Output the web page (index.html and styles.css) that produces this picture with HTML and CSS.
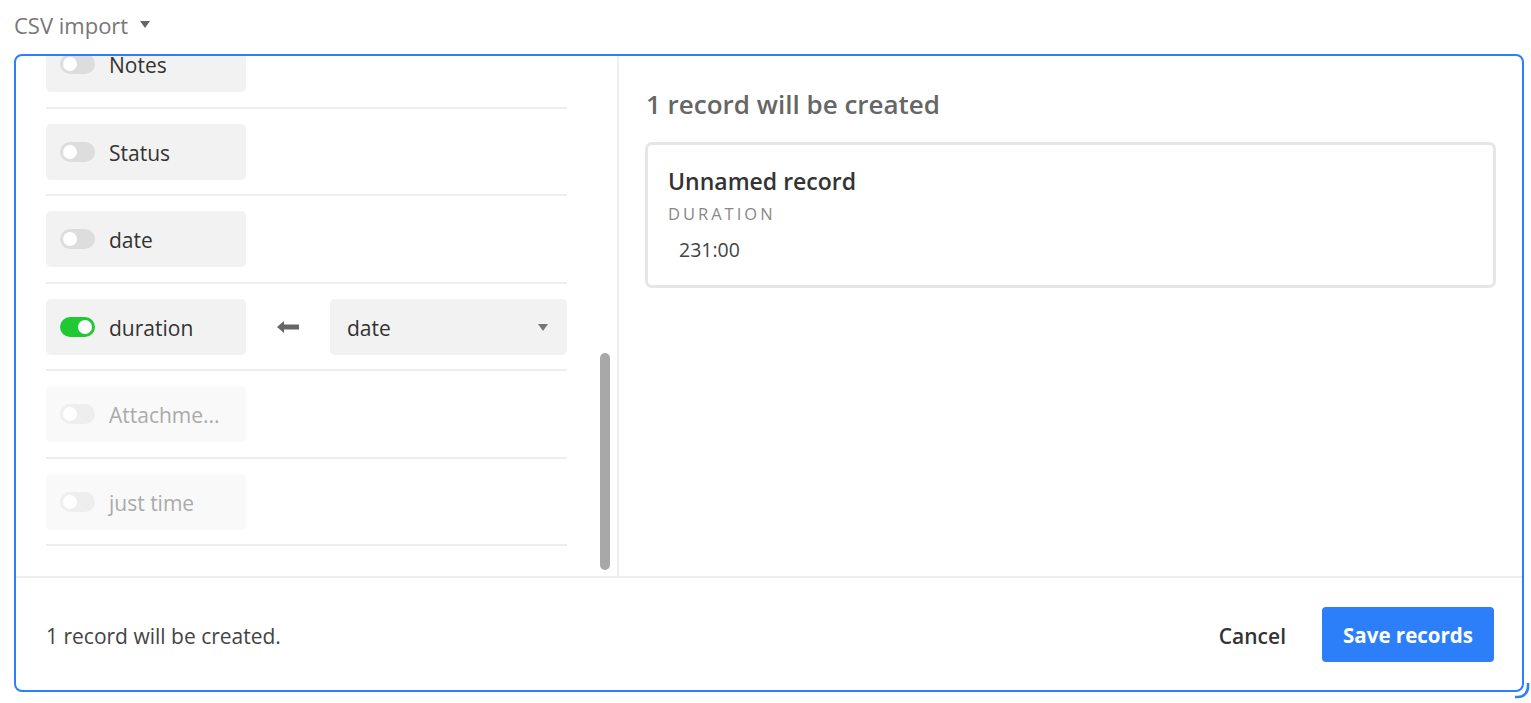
FILE: index.html
```html
<!DOCTYPE html>
<html>
<head>
<meta charset="utf-8">
<link rel="stylesheet" href="styles.css">
</head>
<body>
<div class="title">CSV import <span class="caret"></span></div>
<div class="panel">
  <div class="body">
    <div class="left">
      <div class="list">
        <div class="row"><div class="pill"><span class="toggle"></span><span class="name">Notes</span></div></div>
        <div class="row"><div class="pill"><span class="toggle"></span><span class="name">Status</span></div></div>
        <div class="row"><div class="pill"><span class="toggle"></span><span class="name">date</span></div></div>
        <div class="row">
          <div class="pill"><span class="toggle on"></span><span class="name">duration</span></div>
          <svg class="arrow" width="22" height="12" viewBox="0 0 22 12"><path d="M0 6 L7 0 V3.5 H22 V8.5 H7 V12 Z" fill="#666"/></svg>
          <div class="select"><span>date</span><span class="caret small"></span></div>
        </div>
        <div class="row disabled"><div class="pill"><span class="toggle"></span><span class="name">Attachme...</span></div></div>
        <div class="row disabled"><div class="pill"><span class="toggle"></span><span class="name">just time</span></div></div>
      </div>
      <div class="thumb"></div>
    </div>
    <div class="right">
      <h2 class="heading">1 record will be created</h2>
      <div class="card">
        <div class="card-title">Unnamed record</div>
        <div class="label">DURATION</div>
        <div class="value">231:00</div>
      </div>
    </div>
  </div>
  <div class="footer">
    <div class="summary">1 record will be created.</div>
    <div class="actions">
      <button class="cancel">Cancel</button>
      <button class="save">Save records</button>
    </div>
  </div>
  <svg class="handle" width="16" height="18" viewBox="0 0 16 18"><path d="M13 0 V4 A10 10 0 0 1 3 14 H0" fill="none" stroke="#2d7ff9" stroke-width="2.6"/></svg>
</div>
</body>
</html>
```

FILE: styles.css
```css
* { box-sizing: border-box; }
html, body { margin: 0; padding: 0; background: #fff; }
body {
  font-family: "Open Sans", "Noto Sans", sans-serif;
  color: #333;
  width: 1531px;
  height: 703px;
  overflow: hidden;
}
.title {
  height: 50px;
  padding-left: 14px;
  display: flex;
  align-items: center;
  font-size: 22px;
  color: #777;
  gap: 12px;
}
.caret {
  width: 0; height: 0;
  border-left: 5px solid transparent;
  border-right: 5px solid transparent;
  border-top: 7px solid #666;
  margin-top: -2px;
}
.panel {
  position: relative;
  margin: 4px 0 0 14px;
  width: 1510px;
  height: 638px;
  border: 2.5px solid #2d7ff9;
  border-radius: 8px;
  display: flex;
  flex-direction: column;
}
.body {
  height: 520px;
  display: flex;
}
.left {
  position: relative;
  width: 603px;
  border-right: 2px solid #eee;
  overflow: hidden;
}
.list {
  margin-top: -35px;
  padding-left: 30px;
  width: 551px;
}
.row {
  padding: 15px 0 14.5px;
  border-bottom: 2px solid #eee;
  display: flex;
  align-items: center;
}
.pill {
  width: 200px;
  height: 56px;
  background: #f2f2f2;
  border-radius: 5px;
  display: flex;
  align-items: center;
  padding-left: 14px;
  gap: 14px;
  font-size: 21px;
  color: #333;
  white-space: nowrap;
}
.name { padding-top: 2px; }
.toggle {
  position: relative;
  width: 35px;
  height: 20px;
  border-radius: 10px;
  background: #ddd;
  flex: none;
}
.toggle::after {
  content: "";
  position: absolute;
  top: 3px; left: 3px;
  width: 14px; height: 14px;
  border-radius: 50%;
  background: #fff;
}
.toggle.on { background: #20c933; }
.toggle.on::after { left: 18px; }
.disabled .pill { background: #f9f9f9; color: #aaa; }
.disabled .toggle { background: #eee; }
.arrow { margin: 0 31px 0 31px; }
.select {
  width: 237px;
  height: 56px;
  background: #f2f2f2;
  border-radius: 5px;
  display: flex;
  align-items: center;
  justify-content: space-between;
  padding: 2px 19px 0 17px;
  font-size: 21px;
  color: #333;
}
.caret.small {
  border-left-width: 5px;
  border-right-width: 5px;
  border-top: 7px solid #777;
  margin-top: 0;
}
.thumb {
  position: absolute;
  right: 7px;
  top: 297px;
  width: 10px;
  height: 217px;
  border-radius: 5px;
  background: #a8a8a8;
}
.right {
  flex: 1;
  padding: 30px 26px 0 26px;
}
.heading {
  margin: 0 0 20px 1px;
  font-size: 26px;
  font-weight: 600;
  color: #666;
  line-height: 36px;
}
.card {
  border: 3px solid #e6e6e6;
  border-radius: 7px;
  height: 146px;
  padding: 21px 20px;
}
.card-title {
  font-size: 23px;
  font-weight: 600;
  color: #333;
  line-height: 30px;
}
.label {
  font-size: 16.5px;
  letter-spacing: 3px;
  color: #888;
  line-height: 22px;
  margin-top: 7px;
}
.value {
  font-size: 19.5px;
  color: #444;
  padding-left: 11px;
  margin-top: 12px;
  line-height: 26px;
}
.footer {
  flex: 1;
  border-top: 2px solid #eee;
  display: flex;
  align-items: center;
  justify-content: space-between;
  padding: 0 28px 0 30px;
}
.summary { font-size: 21px; color: #444; padding-top: 4px; }
.actions { display: flex; align-items: center; gap: 20px; }
button { font-family: inherit; border: none; cursor: pointer; }
.cancel {
  background: none;
  font-size: 21px;
  font-weight: 600;
  color: #333;
  padding: 3px 16px 0;
}
.save {
  width: 172px;
  height: 55px;
  background: #2d7ff9;
  color: #fff;
  font-size: 20.5px;
  font-weight: 700;
  border-radius: 4px;
  padding-top: 3px;
}
.handle {
  position: absolute;
  right: -9px;
  bottom: -11px;
}
```
